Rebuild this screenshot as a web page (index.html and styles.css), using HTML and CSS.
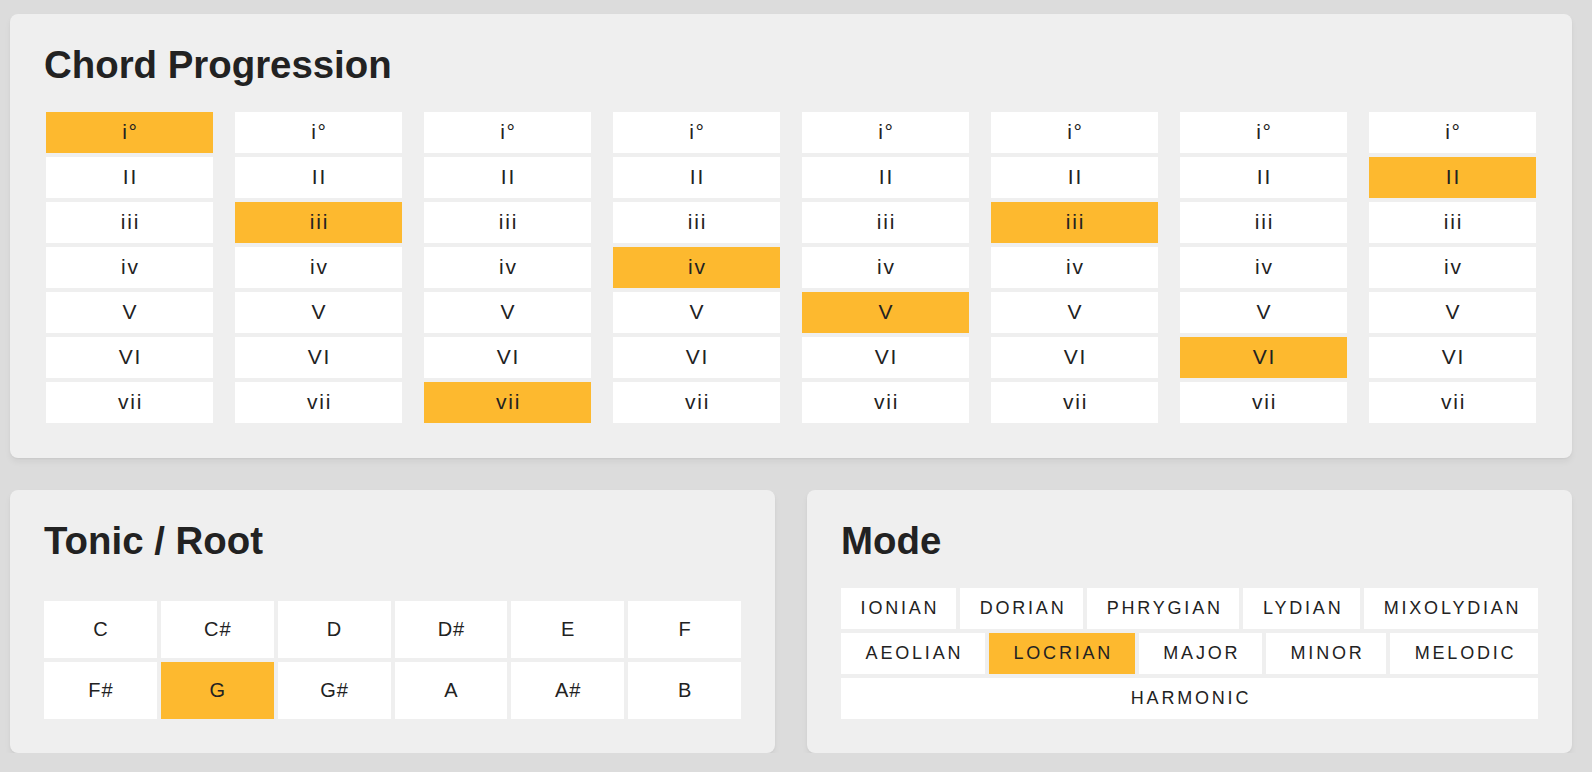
FILE: index.html
```html
<!DOCTYPE html>
<html lang="en">
<head>
<meta charset="utf-8">
<title>Chord Progression</title>
<link rel="stylesheet" href="styles.css">
</head>
<body>
<main class="page">
  <section class="card card-wide">
    <h2 class="card-title">Chord Progression</h2>
    <div class="chords">
      <div class="chord-col">
        <div class="chord on">i°</div><div class="chord">II</div><div class="chord">iii</div><div class="chord">iv</div><div class="chord">V</div><div class="chord">VI</div><div class="chord">vii</div>
      </div>
      <div class="chord-col">
        <div class="chord">i°</div><div class="chord">II</div><div class="chord on">iii</div><div class="chord">iv</div><div class="chord">V</div><div class="chord">VI</div><div class="chord">vii</div>
      </div>
      <div class="chord-col">
        <div class="chord">i°</div><div class="chord">II</div><div class="chord">iii</div><div class="chord">iv</div><div class="chord">V</div><div class="chord">VI</div><div class="chord on">vii</div>
      </div>
      <div class="chord-col">
        <div class="chord">i°</div><div class="chord">II</div><div class="chord">iii</div><div class="chord on">iv</div><div class="chord">V</div><div class="chord">VI</div><div class="chord">vii</div>
      </div>
      <div class="chord-col">
        <div class="chord">i°</div><div class="chord">II</div><div class="chord">iii</div><div class="chord">iv</div><div class="chord on">V</div><div class="chord">VI</div><div class="chord">vii</div>
      </div>
      <div class="chord-col">
        <div class="chord">i°</div><div class="chord">II</div><div class="chord on">iii</div><div class="chord">iv</div><div class="chord">V</div><div class="chord">VI</div><div class="chord">vii</div>
      </div>
      <div class="chord-col">
        <div class="chord">i°</div><div class="chord">II</div><div class="chord">iii</div><div class="chord">iv</div><div class="chord">V</div><div class="chord on">VI</div><div class="chord">vii</div>
      </div>
      <div class="chord-col">
        <div class="chord">i°</div><div class="chord on">II</div><div class="chord">iii</div><div class="chord">iv</div><div class="chord">V</div><div class="chord">VI</div><div class="chord">vii</div>
      </div>
    </div>
  </section>

  <div class="bottom">
    <section class="card">
      <h2 class="card-title">Tonic / Root</h2>
      <div class="tonics">
        <div class="tonic">C</div>
        <div class="tonic">C#</div>
        <div class="tonic">D</div>
        <div class="tonic">D#</div>
        <div class="tonic">E</div>
        <div class="tonic">F</div>
        <div class="tonic">F#</div>
        <div class="tonic on">G</div>
        <div class="tonic">G#</div>
        <div class="tonic">A</div>
        <div class="tonic">A#</div>
        <div class="tonic">B</div>
      </div>
    </section>
    <section class="card">
      <h2 class="card-title">Mode</h2>
      <div class="modes">
        <div class="mode">IONIAN</div>
        <div class="mode">DORIAN</div>
        <div class="mode">PHRYGIAN</div>
        <div class="mode">LYDIAN</div>
        <div class="mode">MIXOLYDIAN</div>
        <div class="mode">AEOLIAN</div>
        <div class="mode on">LOCRIAN</div>
        <div class="mode">MAJOR</div>
        <div class="mode">MINOR</div>
        <div class="mode">MELODIC</div>
        <div class="mode">HARMONIC</div>
      </div>
    </section>
  </div>
</main>
</body>
</html>
```

FILE: styles.css
```css
html, body {
  margin: 0;
  padding: 0;
}
body {
  background: #dcdcdc;
  font-family: "Liberation Sans", Arial, Helvetica, sans-serif;
  color: #222;
}
.page {
  padding: 14px 20px 0 10px;
  display: flex;
  flex-direction: column;
  gap: 32px;
}
.card {
  background: #efefef;
  border-radius: 8px;
  padding: 29px 34px 34px;
  box-shadow: 0 4px 6px rgba(0, 0, 0, 0.05), 0 1px 2px rgba(0, 0, 0, 0.04);
  display: flex;
  flex-direction: column;
}
.card-wide {
  padding-bottom: 35px;
}
.card-title {
  margin: 0 0 25px;
  font-size: 38.4px;
  line-height: 44px;
  font-weight: bold;
  color: #222;
}
.chords {
  display: grid;
  grid-template-columns: repeat(8, 1fr);
  column-gap: 22px;
  padding: 0 2px;
}
.chord-col {
  display: flex;
  flex-direction: column;
  gap: 4px;
}
.chord {
  background: #fff;
  height: 41px;
  box-sizing: border-box;
  padding: 0 0 2px 2px;
  display: flex;
  align-items: center;
  justify-content: center;
  font-size: 21px;
  letter-spacing: 1.8px;
}
.on {
  background: #fdb92f;
}
.bottom {
  display: grid;
  grid-template-columns: 1fr 1fr;
  gap: 32px;
}
.tonics {
  margin-top: auto;
  display: grid;
  grid-template-columns: repeat(6, 1fr);
  gap: 4px;
}
.tonic {
  background: #fff;
  height: 57px;
  display: flex;
  align-items: center;
  justify-content: center;
  font-size: 20px;
  letter-spacing: 1px;
  padding-left: 1px;
}
.tonic.on {
  background: #fdb92f;
}
.modes {
  margin-top: auto;
  display: flex;
  flex-wrap: wrap;
  gap: 4px;
}
.mode {
  flex: 1 1 auto;
  background: #fff;
  padding: 10px 12px 10px 15px;
  line-height: 21px;
  font-size: 18px;
  letter-spacing: 2.8px;
  text-align: center;
}
.mode.on {
  background: #fdb92f;
}
```
